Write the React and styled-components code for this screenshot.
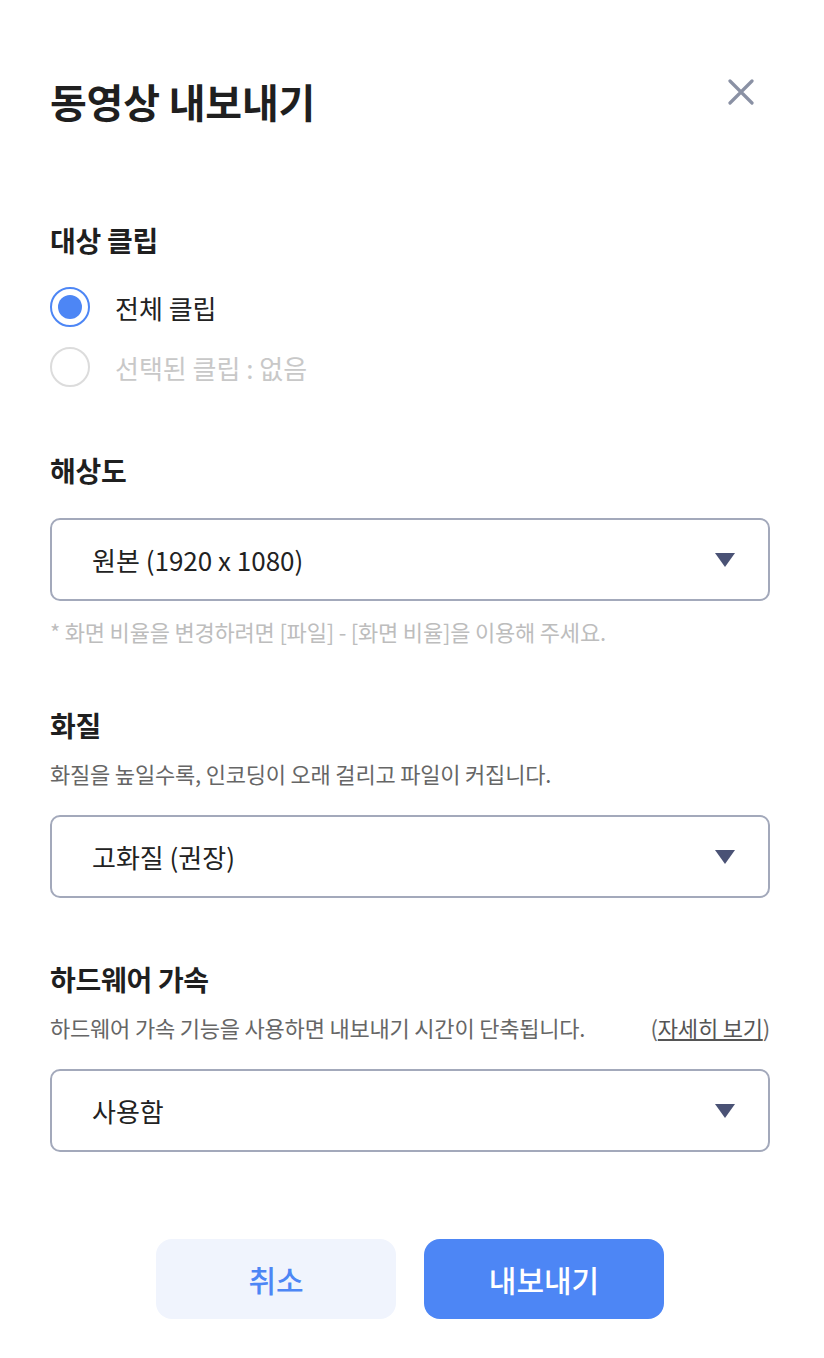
import styled, { createGlobalStyle } from "styled-components";

const Global = createGlobalStyle`
	body {
		margin: 0;
		background: #fff;
		font-family: "Noto Sans CJK KR", "Noto Sans", sans-serif;
		color: #222;
	}
`;

const Dialog = styled.div`
	width: 720px;
	padding: 73px 0 40px 50px;
`;

const Header = styled.div`
	display: flex;
	align-items: center;
	justify-content: space-between;
	height: 56px;
`;

const Title = styled.h1`
	margin: 0;
	font-size: 40px;
	font-weight: 700;
	letter-spacing: -0.2px;
	color: #1f1f1f;
`;

const CloseButton = styled.button`
	border: 0;
	background: none;
	padding: 0;
	margin: 0 14px 18px 0;
	width: 30px;
	height: 30px;
	display: flex;
	align-items: center;
	justify-content: center;
	cursor: pointer;
`;

const Section = styled.section`
	margin-top: ${(p) => p.$gap}px;
`;

const Heading = styled.h2`
	margin: 0;
	font-size: 28px;
	line-height: 36px;
	font-weight: 700;
	letter-spacing: -0.3px;
	color: #1f1f1f;
`;

const Desc = styled.div`
	display: flex;
	justify-content: space-between;
	margin-top: 16px;
	font-size: 22px;
	line-height: 28px;
	color: #666;
	letter-spacing: -0.2px;
	a {
		color: #555;
		text-decoration: underline;
	}
`;

const Note = styled.p`
	margin: 16px 0 0;
	font-size: 22px;
	line-height: 28px;
	letter-spacing: -0.2px;
	color: #bdbdbd;
`;

const Radios = styled.div`
	display: flex;
	flex-direction: column;
	gap: 20px;
	margin-top: 29px;
`;

const RadioRow = styled.label`
	display: flex;
	align-items: center;
	gap: 25px;
	height: 40px;
	font-size: 26px;
	color: ${(p) => (p.$disabled ? "#c8c8c8" : "#222")};
`;

const RadioMark = styled.span`
	box-sizing: border-box;
	width: 40px;
	height: 40px;
	border-radius: 50%;
	border: 2px solid ${(p) => (p.$checked ? "#4d86f5" : "#dcdcdc")};
	display: flex;
	align-items: center;
	justify-content: center;
	&::after {
		content: "";
		width: 24px;
		height: 24px;
		border-radius: 50%;
		background: ${(p) => (p.$checked ? "#4d86f5" : "transparent")};
	}
`;

const Select = styled.div`
	box-sizing: border-box;
	height: 83px;
	margin-top: ${(p) => p.$gap}px;
	border: 2px solid #a3a9bb;
	border-radius: 10px;
	padding: 0 33px 0 40px;
	display: flex;
	align-items: center;
	justify-content: space-between;
	font-size: 26px;
	color: #222;
`;

const Caret = styled.span`
	width: 0;
	height: 0;
	border-left: 10px solid transparent;
	border-right: 10px solid transparent;
	border-top: 14px solid #4a5275;
`;

const Footer = styled.div`
	display: flex;
	justify-content: center;
	gap: 28px;
	margin-top: 87px;
`;

const Button = styled.button`
	width: 240px;
	height: 80px;
	border: 0;
	border-radius: 16px;
	font-family: inherit;
	font-size: 30px;
	font-weight: 500;
	background: ${(p) => (p.$primary ? "#4d86f5" : "#f0f4fd")};
	color: ${(p) => (p.$primary ? "#fff" : "#4d86f5")};
	cursor: pointer;
`;

export default function App() {
	return (
		<>
			<Global />
			<Dialog>
				<Header>
					<Title>동영상 내보내기</Title>
					<CloseButton aria-label="닫기">
						<svg width="26" height="26" viewBox="0 0 26 26">
							<path
								d="M2 2 L24 24 M24 2 L2 24"
								stroke="#8a91a4"
								strokeWidth="3.2"
								strokeLinecap="round"
							/>
						</svg>
					</CloseButton>
				</Header>

				<Section $gap={93}>
					<Heading>대상 클립</Heading>
					<Radios>
						<RadioRow>
							<RadioMark $checked />
							전체 클립
						</RadioRow>
						<RadioRow $disabled>
							<RadioMark />
							선택된 클립 : 없음
						</RadioRow>
					</Radios>
				</Section>

				<Section $gap={65}>
					<Heading>해상도</Heading>
					<Select $gap={30}>
						원본 (1920 x 1080)
						<Caret />
					</Select>
					<Note>* 화면 비율을 변경하려면 [파일] - [화면 비율]을 이용해 주세요.</Note>
				</Section>

				<Section $gap={62}>
					<Heading>화질</Heading>
					<Desc>화질을 높일수록, 인코딩이 오래 걸리고 파일이 커집니다.</Desc>
					<Select $gap={28}>
						고화질 (권장)
						<Caret />
					</Select>
				</Section>

				<Section $gap={63}>
					<Heading>하드웨어 가속</Heading>
					<Desc>
						<span>하드웨어 가속 기능을 사용하면 내보내기 시간이 단축됩니다.</span>
						<span>
							(<a href="#">자세히 보기</a>)
						</span>
					</Desc>
					<Select $gap={28}>
						사용함
						<Caret />
					</Select>
				</Section>

				<Footer>
					<Button>취소</Button>
					<Button $primary>내보내기</Button>
				</Footer>
			</Dialog>
		</>
	);
}
